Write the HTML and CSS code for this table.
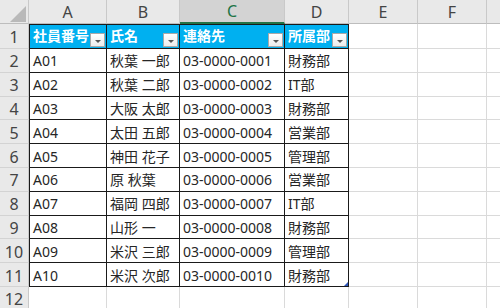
FILE: index.html
```html
<!DOCTYPE html>
<html lang="ja">
<head>
<meta charset="utf-8">
<title>社員名簿</title>
<link rel="stylesheet" href="styles.css">
</head>
<body>
<div class="viewport">
<table class="sheet">
  <colgroup>
    <col class="w-rh"><col class="w-a"><col class="w-b"><col class="w-c"><col class="w-d"><col class="w-e"><col class="w-f"><col class="w-g">
  </colgroup>
  <thead>
    <tr class="colhdr">
      <th class="corner"><svg class="corner-tri" width="18" height="18" viewBox="0 0 18 18"><polygon points="17,1 17,17 1,17" fill="#b9b9b9"/></svg></th>
      <th>A</th><th>B</th><th class="active">C</th><th>D</th><th>E</th><th>F</th><th></th>
    </tr>
  </thead>
  <tbody>
    <tr class="r-first">
      <th class="rn">1</th>
      <td class="t a top hd"><div class="hcell"><span>社員番号</span><span class="dd"></span></div></td>
      <td class="t top hd"><div class="hcell"><span>氏名</span><span class="dd"></span></div></td>
      <td class="t top hd"><div class="hcell"><span>連絡先</span><span class="dd"></span></div></td>
      <td class="t top hd"><div class="hcell"><span>所属部</span><span class="dd"></span></div></td>
      <td></td><td></td><td></td>
    </tr>
    <tr class="r"><th class="rn">2</th><td class="t a">A01</td><td class="t">秋葉 一郎</td><td class="t">03-0000-0001</td><td class="t">財務部</td><td></td><td></td><td></td></tr>
    <tr class="r"><th class="rn">3</th><td class="t a">A02</td><td class="t">秋葉 二郎</td><td class="t">03-0000-0002</td><td class="t">IT部</td><td></td><td></td><td></td></tr>
    <tr class="r"><th class="rn">4</th><td class="t a">A03</td><td class="t">大阪 太郎</td><td class="t">03-0000-0003</td><td class="t">財務部</td><td></td><td></td><td></td></tr>
    <tr class="r"><th class="rn">5</th><td class="t a">A04</td><td class="t">太田 五郎</td><td class="t">03-0000-0004</td><td class="t">営業部</td><td></td><td></td><td></td></tr>
    <tr class="r"><th class="rn">6</th><td class="t a">A05</td><td class="t">神田 花子</td><td class="t">03-0000-0005</td><td class="t">管理部</td><td></td><td></td><td></td></tr>
    <tr class="r"><th class="rn">7</th><td class="t a">A06</td><td class="t">原 秋葉</td><td class="t">03-0000-0006</td><td class="t">営業部</td><td></td><td></td><td></td></tr>
    <tr class="r"><th class="rn">8</th><td class="t a">A07</td><td class="t">福岡 四郎</td><td class="t">03-0000-0007</td><td class="t">IT部</td><td></td><td></td><td></td></tr>
    <tr class="r"><th class="rn">9</th><td class="t a">A08</td><td class="t">山形 一</td><td class="t">03-0000-0008</td><td class="t">財務部</td><td></td><td></td><td></td></tr>
    <tr class="r"><th class="rn">10</th><td class="t a">A09</td><td class="t">米沢 三郎</td><td class="t">03-0000-0009</td><td class="t">管理部</td><td></td><td></td><td></td></tr>
    <tr class="r"><th class="rn">11</th><td class="t a">A10</td><td class="t">米沢 次郎</td><td class="t">03-0000-0010</td><td class="t last">財務部<span class="handle"></span></td><td></td><td></td><td></td></tr>
    <tr class="r-last"><th class="rn">12</th><td></td><td></td><td></td><td></td><td></td><td></td><td></td></tr>
  </tbody>
</table>
</div>
</body>
</html>
```

FILE: styles.css
```css
html, body {
  margin: 0;
  padding: 0;
  background: #ffffff;
  overflow: hidden;
}

.viewport {
  width: 500px;
  height: 308px;
  overflow: hidden;
}

.sheet {
  border-collapse: separate;
  border-spacing: 0;
  table-layout: fixed;
  width: 567px;
  font-family: "Noto Sans", "Noto Sans CJK JP", sans-serif;
  font-size: 14px;
  color: #262626;
}

.sheet col, .sheet th, .sheet td {
  box-sizing: border-box;
}

.w-rh { width: 29px; }
.w-a { width: 78px; }
.w-b { width: 73px; }
.w-c { width: 105px; }
.w-d { width: 64px; }
.w-e { width: 69px; }
.w-f { width: 69px; }
.w-g { width: 80px; }

.sheet th, .sheet td {
  padding: 0;
  border-right: 1px solid #dadada;
  border-bottom: 1px solid #dadada;
  white-space: nowrap;
  overflow: hidden;
}

.colhdr th {
  height: 24px;
  background: #e9e9e9;
  border-right: 1px solid #c9c9c9;
  border-bottom: 1px solid #bdbdbd;
  font-weight: 400;
  font-size: 16px;
  color: #444444;
  text-align: center;
  vertical-align: middle;
  line-height: 20px;
}

.colhdr th.active {
  background: #d3d3d3;
  color: #217346;
  border-bottom: 2px solid #217346;
}

.corner-tri {
  display: block;
  margin: 4px 0 0 9px;
}

.r-first { height: 24px; }
.r { height: 23.8px; }
.r-last { height: 22px; }

.sheet th.rn {
  background: #e9e9e9;
  border-right: 1px solid #c9c9c9;
  border-bottom: 1px solid #d3d3d3;
  font-weight: 400;
  font-size: 16px;
  color: #444444;
  text-align: center;
  vertical-align: middle;
  padding-top: 2px;
  line-height: 20px;
}

.r-last th.rn {
  border-bottom: none;
  line-height: 18px;
}

.sheet td {
  vertical-align: middle;
  padding-left: 3px;
  padding-top: 2px;
  line-height: 20px;
}

.r-last td {
  border-bottom: none;
}

.sheet td.t {
  border-right: 1px solid #1a1a1a;
  border-bottom: 1px solid #1a1a1a;
}

.sheet td.a {
  border-left: 1px solid #1a1a1a;
}

.sheet td.top {
  border-top: 1px solid #1a1a1a;
}

.sheet td.hd {
  background: #00b0f0;
  color: #ffffff;
  font-weight: 700;
  padding: 0 0 1px 3px;
  vertical-align: bottom;
}

.hcell {
  display: flex;
  align-items: flex-end;
  justify-content: space-between;
  height: 22px;
}

.hcell span:first-child {
  line-height: 20px;
  padding-bottom: 1px;
}

.dd {
  flex: none;
  box-sizing: border-box;
  width: 15px;
  height: 14px;
  margin-right: 1px;
  background: linear-gradient(#ffffff, #ececec);
  border: 1px solid #a9a9a9;
  display: flex;
  align-items: center;
  justify-content: center;
}

.dd::after {
  content: "";
  width: 0;
  height: 0;
  border-left: 3px solid transparent;
  border-right: 3px solid transparent;
  border-top: 3px solid #555555;
  margin-top: 2px;
}

.sheet td.last {
  position: relative;
}

.handle {
  position: absolute;
  right: 0;
  bottom: 0;
  width: 4px;
  height: 4px;
  background: #2e56b8;
  clip-path: polygon(100% 0, 100% 100%, 0 100%);
}
```
